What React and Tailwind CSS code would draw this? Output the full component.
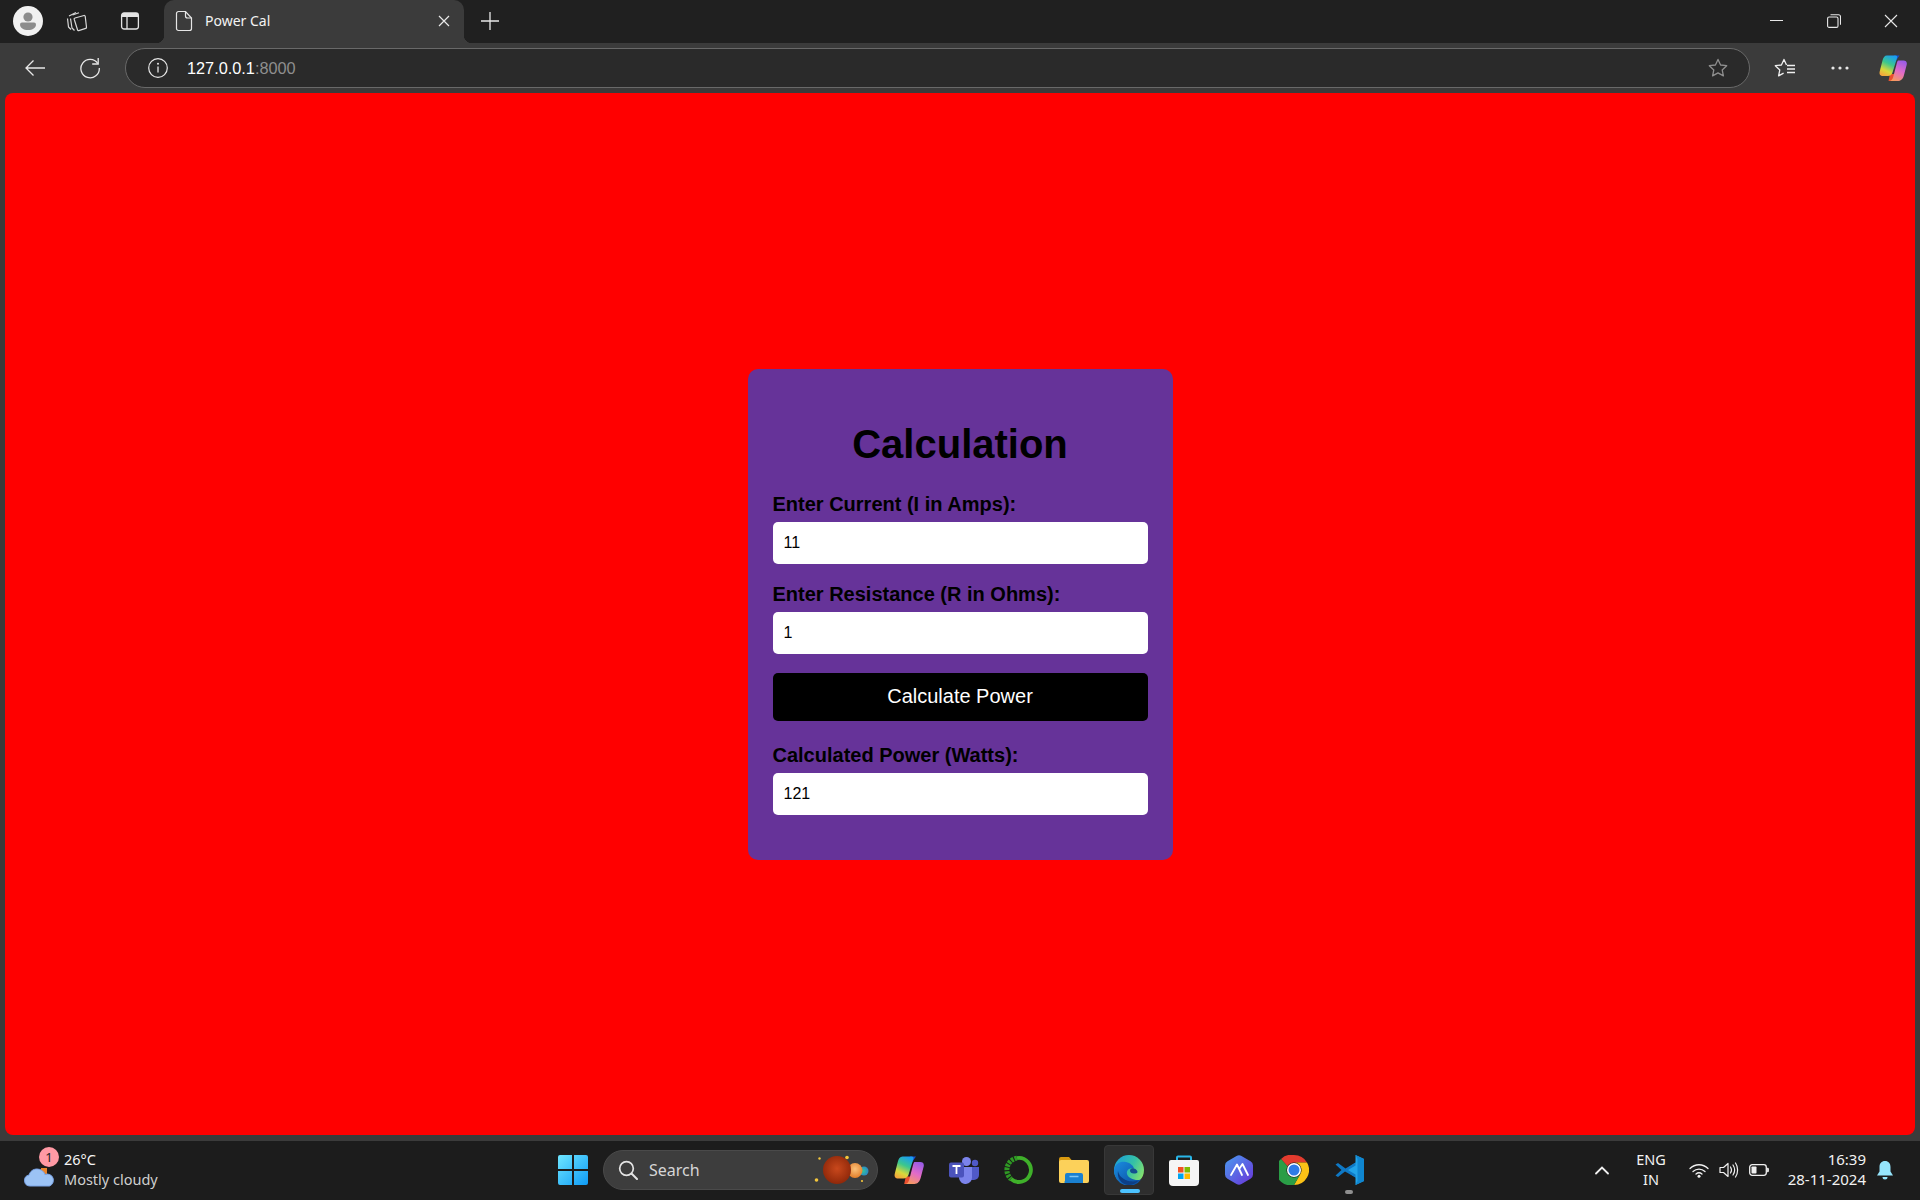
import React from "react";

const chrome = { fontFamily: '"Noto Sans", "Open Sans", sans-serif' };
const page = { fontFamily: '"Liberation Sans", Arial, sans-serif' };

const S = ({ w = 24, h = 24, vb, children, className = "" }) => (
  <svg width={w} height={h} viewBox={vb || `0 0 ${w} ${h}`} fill="none" className={`shrink-0 ${className}`}>
    {children}
  </svg>
);

const Avatar = () => (
  <S w={30} h={30}>
    <circle cx="15" cy="15" r="15" fill="#f1f1f1" />
    <circle cx="15" cy="11" r="4.6" fill="#8c8c8c" />
    <path d="M7 18.5a2 2 0 0 1 2-2h12a2 2 0 0 1 2 2c0 3.5-3.5 5.5-8 5.5s-8-2-8-5.5Z" fill="#8c8c8c" />
  </S>
);

const Collections = () => (
  <S w={22} h={22}>
    <g stroke="#d8d8d8" strokeWidth="1.2" strokeLinejoin="round">
      <path d="M3 6 10 2.500M1.500 8.500 2.500 17l2.500 2.500" />
      <path d="M6.500 5 13 2.800M4.500 8.500 6 18l2.500 2.500" />
      <path d="M9 8l9-2.500a1 1 0 0 1 1.200.8l1.300 11a1 1 0 0 1-.8 1.100l-7 2.200a1 1 0 0 1-1.200-.8L8.200 9.200A1 1 0 0 1 9 8Z" />
    </g>
  </S>
);

const VerticalTabs = () => (
  <S w={20} h={20}>
    <rect x="1.6" y="2" width="16.8" height="16" rx="2.5" stroke="#e4e4e4" strokeWidth="1.3" />
    <path d="M2 3.5a1.5 1.5 0 0 1 1.5-1.5h13A1.5 1.5 0 0 1 18 3.5V6H2Z" fill="#e4e4e4" />
    <path d="M7 6v12" stroke="#e4e4e4" strokeWidth="1.3" />
  </S>
);

const Doc = () => (
  <S w={18} h={22}>
    <path d="M3.5 1.5h7l6 6.5v10.5a2 2 0 0 1-2 2h-11a2 2 0 0 1-2-2v-15a2 2 0 0 1 2-2Z" stroke="#e6e6e6" strokeWidth="1.2" />
    <path d="M10.5 1.5V6a2 2 0 0 0 2 2h4" stroke="#e6e6e6" strokeWidth="1.2" />
  </S>
);

const X = ({ size = 12, stroke = "#e8e8e8", width = 1.2 }) => (
  <S w={size} h={size}>
    <path d={`M1 1L${size - 1} ${size - 1}M${size - 1} 1L1 ${size - 1}`} stroke={stroke} strokeWidth={width} />
  </S>
);

const Plus = () => (
  <S w={18} h={18}>
    <path d="M9 0v18M0 9h18" stroke="#e8e8e8" strokeWidth="1.3" />
  </S>
);

const Back = () => (
  <S w={22} h={18}>
    <path d="M21 9H2M9.5 1.5 2 9l7.5 7.5" stroke="#e8e8e8" strokeWidth="1.3" />
  </S>
);

const Refresh = () => (
  <S w={22} h={22}>
    <path d="M18.8 6.5A9.2 9.2 0 1 0 20.3 11" stroke="#e8e8e8" strokeWidth="1.3" />
    <path d="M19.2 1v6h-6" stroke="#e8e8e8" strokeWidth="1.3" />
  </S>
);

const Info = () => (
  <S w={20} h={20}>
    <circle cx="10" cy="10" r="9.3" stroke="#e8e8e8" strokeWidth="1.2" />
    <path d="M10 8.6v6" stroke="#e8e8e8" strokeWidth="1.3" />
    <circle cx="10" cy="5.8" r="1" fill="#e8e8e8" />
  </S>
);

const StarPath = "M10 1.4 12.6 7l6.1.7-4.5 4.2 1.2 6L10 14.9l-5.4 3 1.2-6L1.3 7.7 7.4 7Z";

const Star = () => (
  <S w={20} h={20}>
    <path d={StarPath} stroke="#8f8f8f" strokeWidth="1.3" strokeLinejoin="round" />
  </S>
);

const Favorites = () => (
  <S w={22} h={20}>
    <path d="M12.5 7 10 1.4 7.4 7 1.3 7.7l4.5 4.2-1.2 6 5-2.8" stroke="#efefef" strokeWidth="1.3" strokeLinejoin="round" />
    <path d="M13 7.5h8M13 11h8M13 14.5h8" stroke="#efefef" strokeWidth="1.3" />
  </S>
);

const Dots = () => (
  <S w={18} h={4}>
    <circle cx="2" cy="2" r="1.6" fill="#e8e8e8" />
    <circle cx="9" cy="2" r="1.6" fill="#e8e8e8" />
    <circle cx="16" cy="2" r="1.6" fill="#e8e8e8" />
  </S>
);

const Win = ({ children }) => <div className="w-[57px] flex items-center justify-center">{children}</div>;

const Copilot = ({ id, size = 28 }) => (
  <svg width={size} height={size} viewBox="0 0 28 28" className="shrink-0">
    <defs>
      <linearGradient id={`${id}a`} x1="0.700" y1="0" x2="0.300" y2="1">
        <stop offset="0" stopColor="#1a9df0" />
        <stop offset="0.400" stopColor="#3bc78e" />
        <stop offset="0.750" stopColor="#d8d83a" />
        <stop offset="1" stopColor="#f4a63c" />
      </linearGradient>
      <linearGradient id={`${id}b`} x1="0.700" y1="0" x2="0.300" y2="1">
        <stop offset="0" stopColor="#9a5ce6" />
        <stop offset="0.500" stopColor="#e26bc8" />
        <stop offset="1" stopColor="#f79a5e" />
      </linearGradient>
    </defs>
    <path d="M15 1.500h5.500L16 8 13 20h-3L14 6Z" fill="#1550d0" />
    <path d="M9.500 27h7c2 0 3-1 3.500-2.500L22 20H11Z" fill="#ea4e2e" />
    <path d="M8 1.500h8.500c1.500 0 2 1 1.500 2.500L13.800 17.500c-.7 3-2.300 4.500-5 4.500H4c-2.500 0-4-1.500-3.300-4.500L3.500 6.500C4.300 3.500 5.500 1.500 8 1.500Z" fill={`url(#${id}a)`} />
    <path d="M19 6.500h5.500c2.500 0 3.800 1.500 3.200 4.200L25 21c-.8 3.500-2.800 6-6 6h-9c2 0 3.500-1.500 4.200-4L18 8.500c.3-1 .6-1.500 1-2Z" fill={`url(#${id}b)`} />
  </svg>
);

const Weather = () => (
  <S w={32} h={26}>
    <path d="M17 4h6v6h-6Z" fill="#e8842c" />
    <path d="M6 22a5.500 5.500 0 0 1-1-10.900C6 7.500 9 5 13 5c4.200 0 7 2.500 8 5.500A5.800 5.800 0 0 1 25.500 22Z" fill="#9cc3f5" stroke="#7aa3e6" strokeWidth="1" />
  </S>
);

const WinLogo = () => (
  <S w={30} h={30}>
    <defs>
      <linearGradient id="wl" x1="0" y1="0" x2="1" y2="1">
        <stop offset="0" stopColor="#6ee6ff" />
        <stop offset="1" stopColor="#0f9bf5" />
      </linearGradient>
    </defs>
    <path d="M0 2a2 2 0 0 1 2-2h12v14H0Z M16 0h12a2 2 0 0 1 2 2v12H16Z M0 16h14v14H2a2 2 0 0 1-2-2Z M16 16h14v12a2 2 0 0 1-2 2H16Z" fill="url(#wl)" />
  </S>
);

const SearchGlass = () => (
  <S w={20} h={20}>
    <circle cx="8.500" cy="8.500" r="6.800" stroke="#e4e4e4" strokeWidth="1.700" />
    <path d="M13.500 13.500 19 19" stroke="#e4e4e4" strokeWidth="2" strokeLinecap="round" />
  </S>
);

const Planets = () => (
  <S w={56} h={32}>
    <defs>
      <radialGradient id="p1" cx="0.500" cy="0.450" r="0.600">
        <stop offset="0" stopColor="#c9481c" />
        <stop offset="1" stopColor="#8a2508" />
      </radialGradient>
      <radialGradient id="p2" cx="0.500" cy="0.400" r="0.600">
        <stop offset="0" stopColor="#fbc27a" />
        <stop offset="1" stopColor="#e27e2a" />
      </radialGradient>
      <radialGradient id="p3" cx="0.400" cy="0.500" r="0.600">
        <stop offset="0" stopColor="#33c49a" />
        <stop offset="1" stopColor="#2a85c9" />
      </radialGradient>
    </defs>
    <circle cx="51" cy="17" r="4.500" fill="url(#p3)" />
    <circle cx="42" cy="16.500" r="7.500" fill="url(#p2)" />
    <circle cx="24" cy="16" r="14" fill="url(#p1)" />
    <circle cx="3.500" cy="26" r="1.800" fill="#f4c63c" />
    <circle cx="6.500" cy="4.500" r="1.200" fill="#f4c63c" />
    <circle cx="34" cy="3.500" r="1.800" fill="#f4c63c" />
    <circle cx="49" cy="27" r="1.100" fill="#f4c63c" />
  </S>
);

const Teams = () => (
  <S w={30} h={28}>
    <circle cx="17.500" cy="5.500" r="4.500" fill="#7b83eb" />
    <circle cx="26" cy="7" r="3.200" fill="#5059c9" />
    <path d="M20 11h10v8a5 5 0 0 1-5 5h-3Z" fill="#5059c9" />
    <path d="M9 11h14v10a6.500 6.500 0 0 1-13 1Z" fill="#7b83eb" />
    <rect x="0" y="6.500" width="15" height="15" rx="2" fill="#4b53bc" />
    <path d="M3.500 10h8M7.500 10v8" stroke="#fff" strokeWidth="1.800" />
  </S>
);

const Ring = () => (
  <S w={30} h={30}>
    <path d="M13 3.100A12 12 0 1 1 7 24" stroke="#3fb02a" strokeWidth="3.800" />
    <path d="M13 3.100A12 12 0 0 0 7 24" stroke="#2f9a24" strokeWidth="5" strokeDasharray="2.600 1" />
  </S>
);

const Folder = () => (
  <S w={30} h={26}>
    <path d="M0 2a2 2 0 0 1 2-2h8l3 3.500H2L0 6Z" fill="#d99a10" />
    <path d="M0 5a2 2 0 0 1 2-2h26a2 2 0 0 1 2 2v19a2 2 0 0 1-2 2H2a2 2 0 0 1-2-2Z" fill="#fcd15a" />
    <path d="M6 24v-6a2 2 0 0 1 2-2h14a2 2 0 0 1 2 2v8H7a1 1 0 0 1-1-2Z" fill="#1a80d0" />
    <path d="M10.500 19.500h9" stroke="#7fc6f5" strokeWidth="1.500" />
  </S>
);

const Edge = () => (
  <S w={30} h={30}>
    <defs>
      <linearGradient id="e1" x1="0" y1="0.200" x2="1" y2="0.700">
        <stop offset="0" stopColor="#1ba0d8" />
        <stop offset="0.550" stopColor="#35c1a5" />
        <stop offset="1" stopColor="#8be46a" />
      </linearGradient>
      <linearGradient id="e2" x1="0" y1="0" x2="1" y2="1">
        <stop offset="0" stopColor="#1a8ce0" />
        <stop offset="1" stopColor="#0a4a9c" />
      </linearGradient>
    </defs>
    <circle cx="15" cy="15" r="15" fill="url(#e1)" />
    <path d="M0 15C1 8 7 6 12 7c4.500 1 7.500 4 8 6.500-3-.8-6 .3-7 3-.8 3 1.500 6.500 7 8 3.500 1 6 .5 7.500-.5A15 15 0 0 1 0 15Z" fill="url(#e2)" />
    <path d="M20 13.500c2 .6 3.500 2 3.500 3.500 0 1.200-2 1.500-3.500 1.500-2.500 0-4-1.300-4-2.800 0-2 2-3 4-2.200Z" fill="#14508f" />
    <path d="M12.500 29.800C6 28 3 22 4 16c.8 4.500 4 7.500 9 9.500 3 1.200 8 1.200 11.500.2A15 15 0 0 1 12.500 29.800Z" fill="#0d3f86" />
  </S>
);

const Store = () => (
  <S w={30} h={31}>
    <path d="M8 6V2.500a1 1 0 0 1 1-1h12a1 1 0 0 1 1 1V6" stroke="#29b6e8" strokeWidth="2" />
    <path d="M0 7a2 2 0 0 1 2-2h26a2 2 0 0 1 2 2v20a4 4 0 0 1-4 4H4a4 4 0 0 1-4-4Z" fill="#f5f5f5" />
    <rect x="9" y="12" width="5.500" height="5.500" fill="#f25022" />
    <rect x="15.500" y="12" width="5.500" height="5.500" fill="#7fba00" />
    <rect x="9" y="18.500" width="5.500" height="5.500" fill="#00a4ef" />
    <rect x="15.500" y="18.500" width="5.500" height="5.500" fill="#ffb900" />
  </S>
);

const Hex = () => (
  <S w={28} h={30}>
    <defs>
      <linearGradient id="hx" x1="0" y1="0" x2="1" y2="1">
        <stop offset="0" stopColor="#4a9cf0" />
        <stop offset="1" stopColor="#6a32d8" />
      </linearGradient>
    </defs>
    <path d="M11.500 1a5 5 0 0 1 5 0l9 5.200a5 5 0 0 1 2.500 4.300v9a5 5 0 0 1-2.500 4.300l-9 5.200a5 5 0 0 1-5 0l-9-5.200A5 5 0 0 1 0 19.500v-9a5 5 0 0 1 2.500-4.300Z" fill="url(#hx)" />
    <path d="M6 20 12 9.500 17 20M14.500 13.500 17.500 9 23 20" stroke="#fff" strokeWidth="1.800" strokeLinejoin="round" strokeLinecap="round" />
  </S>
);

const Chrome = () => (
  <S w={30} h={30}>
    <path d="M15 0a15 15 0 0 1 13 7.500H15a7.500 7.500 0 0 0-6.500 3.750L2 3.900A15 15 0 0 1 15 0Z" fill="#e33b2e" />
    <path d="M28 7.500A15 15 0 0 1 15 30l6.500-11.250A7.500 7.500 0 0 0 21.500 11.250 7.500 7.500 0 0 0 15 7.500Z" fill="#fbc116" />
    <path d="M2 3.900 8.500 11.250a7.500 7.500 0 0 0 0 7.500 7.500 7.500 0 0 0 6.500 3.750 7.500 7.500 0 0 0 6.500-3.750L15 30A15 15 0 0 1 2 3.900Z" fill="#2a9d46" />
    <circle cx="15" cy="15" r="7" fill="#fff" />
    <circle cx="15" cy="15" r="5.500" fill="#2f7be6" />
  </S>
);

const VSCode = () => (
  <S w={30} h={30}>
    <path d="M21.500 0 30 4v22l-8.500 4V22.500L11 15 21.500 7.500Z" fill="#22a3e8" />
    <path d="M21.500 0 30 4v22l-8.500 4 2-4V4Z" fill="#0f86d0" />
    <path d="M1.500 9.500 4 8l7.500 5.500L21.500 7.500v3L14 15l7.500 4.500v3L11 16.500 4 22l-2.500-1.500L7.500 15Z" fill="#0f78c4" />
  </S>
);

const Chevron = () => (
  <S w={14} h={9}>
    <path d="M1 7.500 7 1.500l6 6" stroke="#f0f0f0" strokeWidth="1.800" strokeLinecap="round" />
  </S>
);

const Wifi = () => (
  <S w={20} h={15}>
    <g stroke="#f0f0f0" strokeWidth="1.300" strokeLinecap="round">
      <path d="M1 5.500c5-5 13-5 18 0" />
      <path d="M4 8.500c3.500-3.300 8.500-3.300 12 0" />
      <path d="M7 11c2-1.700 4-1.700 6 0" />
    </g>
    <circle cx="10" cy="13.300" r="1.500" fill="#f0f0f0" />
  </S>
);

const Volume = () => (
  <S w={20} h={16}>
    <path d="M1 5.500h3.500L9 1.500v13l-4.500-4H1Z" stroke="#f0f0f0" strokeWidth="1.200" strokeLinejoin="round" />
    <path d="M11.500 5c1.200 1.800 1.200 4.200 0 6M14 3c2 3 2 7 0 10M16.500 1c2.800 4 2.800 10 0 14" stroke="#f0f0f0" strokeWidth="1.200" strokeLinecap="round" />
  </S>
);

const Battery = () => (
  <S w={20} h={12}>
    <rect x="0.700" y="0.700" width="16.600" height="10.600" rx="2.500" stroke="#f0f0f0" strokeWidth="1.300" />
    <rect x="2.500" y="2.500" width="5" height="7" rx="0.800" fill="#f0f0f0" />
    <path d="M18.500 4v4a1 1 0 0 0 1-1V5a1 1 0 0 0-1-1Z" fill="#f0f0f0" stroke="#f0f0f0" strokeWidth="0.800" />
  </S>
);

const Bell = () => (
  <S w={16} h={19}>
    <path d="M8 0c3.500 0 5.500 2.500 5.500 6v4.500L16 14.500H0l2.500-4V6C2.500 2.500 4.500 0 8 0Z" fill="#95e4fb" />
    <path d="M5.500 16h5a2.500 2.500 0 0 1-5 0Z" fill="#95e4fb" />
  </S>
);

const TaskIcon = ({ children, active, dot }) => (
  <div className={`relative w-[50px] h-[50px] mx-[2.500px] flex items-center justify-center rounded ${active ? "bg-[#2e2e2e] border border-[#383838]" : ""}`}>
    {children}
    {active && <span className="absolute bottom-[1px] left-[15px] w-5 h-[4px] rounded-full bg-[#4cc2ff]" />}
    {dot && <span className="absolute bottom-[1px] left-[21px] w-2 h-[4px] rounded-full bg-[#8f8f8f]" />}
  </div>
);

const Field = ({ label, value, top }) => (
  <div className={top}>
    <label className="block h-[25px] mb-[5px] text-[20px] leading-[25px] font-bold text-black">{label}</label>
    <input
      readOnly
      value={value}
      className="block w-full h-[42px] px-[11px] rounded-[5px] bg-white text-[16px] text-black outline-none"
      style={page}
    />
  </div>
);

export default function App() {
  return (
    <div className="w-[1920px] h-[1200px] flex flex-col overflow-hidden bg-[#3b3b3b]" style={chrome}>
      {/* Title bar */}
      <div className="h-[43px] shrink-0 flex items-center bg-[#202020] pl-[13px] pb-[2px]">
        <Avatar />
        <div className="w-[39px] ml-[14px] flex justify-center"><Collections /></div>
        <div className="w-[20px] ml-[24px]"><VerticalTabs /></div>
        <div className="relative ml-[24px] -mb-[2px] w-[300px] h-[43px] rounded-t-[10px] bg-[#3b3b3b] flex items-center pl-[11px] pr-[14px] pb-[2px]">
          <Doc />
          <span className="ml-[12px] text-[14px] text-[#f3f3f3]">Power Cal</span>
          <div className="ml-auto"><X /></div>
          <span className="absolute bottom-0 -left-[8px] w-2 h-2 bg-[radial-gradient(circle_at_0_0,#202020_8px,#3b3b3b_8.500px)]" />
          <span className="absolute bottom-0 -right-[8px] w-2 h-2 bg-[radial-gradient(circle_at_100%_0,#202020_8px,#3b3b3b_8.500px)]" />
        </div>
        <div className="ml-[17px]"><Plus /></div>
        <div className="ml-auto flex items-center pr-[1px]">
          <Win><div className="w-[13px] h-[1px] bg-[#e8e8e8]" /></Win>
          <Win>
            <S w={14} h={14}>
              <rect x="0.600" y="3" width="10.400" height="10.400" rx="1.500" stroke="#e8e8e8" strokeWidth="1.100" />
              <path d="M3.500 0.800h8a2 2 0 0 1 2 2v8" stroke="#e8e8e8" strokeWidth="1.100" />
            </S>
          </Win>
          <Win><X size={14} width={1.100} /></Win>
        </div>
      </div>

      {/* Toolbar */}
      <div className="h-[50px] shrink-0 flex items-center bg-[#3b3b3b] pl-[24px]">
        <Back />
        <div className="ml-[33px]"><Refresh /></div>
        <div className="ml-[24px] w-[1625px] h-[40px] rounded-full border border-[#696969] bg-[#2a2a2a] flex items-center pl-[22px] pr-[21px]">
          <Info />
          <span className="ml-[19px] text-[16.300px] text-white" style={page}>
            127.0.0.1<span className="text-[#8f8f8f]">:8000</span>
          </span>
          <div className="ml-auto"><Star /></div>
        </div>
        <div className="ml-[24px]"><Favorites /></div>
        <div className="ml-[35px]"><Dots /></div>
        <div className="ml-[30px]"><Copilot id="c1" /></div>
      </div>

      {/* Page */}
      <div className="h-[1042px] shrink-0 mx-[5px] rounded-lg bg-[#ff0000] flex items-center justify-center" style={page}>
        <div className="w-[425px] h-[491px] rounded-[10px] bg-[#663399] px-[25px] pt-[52px] pb-[45px]">
          <h1 className="h-[46px] text-[40px] leading-[46px] font-bold text-black text-center">Calculation</h1>
          <Field label="Enter Current (I in Amps):" value="11" top="mt-[25px]" />
          <Field label="Enter Resistance (R in Ohms):" value="1" top="mt-[18px]" />
          <button className="block w-full h-[48px] mt-[19px] pb-[2px] rounded-[5px] bg-black text-white text-[20px]">Calculate Power</button>
          <Field label="Calculated Power (Watts):" value="121" top="mt-[22px]" />
        </div>
      </div>

      {/* Taskbar */}
      <div className="mt-[6px] h-[59px] shrink-0 flex items-center bg-[#1c1c1c] text-white pb-[1px]">
        <div className="w-[545px] flex items-center pl-[24px]">
          <div className="relative w-[34px] h-[40px] flex items-end">
            <Weather />
            <span className="absolute -top-[3px] left-[15px] w-5 h-5 rounded-full bg-[#ff99a4] text-[#222] text-[13px] leading-5 text-center">1</span>
          </div>
          <div className="ml-[6px] pb-[3px] flex flex-col text-[14.500px] leading-[20px]">
            <span className="text-[#f5f5f5]">26°C</span>
            <span className="text-[#cfcfcf]">Mostly cloudy</span>
          </div>
        </div>
        <div className="w-[55px] flex justify-center"><WinLogo /></div>
        <div className="ml-[3px] w-[275px] h-[40px] rounded-full bg-[#3d3d3d] border border-[#4a4a4a] flex items-center pl-[14px] pr-[8px]">
          <SearchGlass />
          <span className="ml-[11px] text-[16px] text-[#d6d6d6]">Search</span>
          <div className="ml-auto"><Planets /></div>
        </div>
        <div className="ml-[3px] flex items-center">
          <TaskIcon><Copilot id="c2" size={30} /></TaskIcon>
          <TaskIcon><Teams /></TaskIcon>
          <TaskIcon><Ring /></TaskIcon>
          <TaskIcon><Folder /></TaskIcon>
          <TaskIcon active><Edge /></TaskIcon>
          <TaskIcon><Store /></TaskIcon>
          <TaskIcon><Hex /></TaskIcon>
          <TaskIcon><Chrome /></TaskIcon>
          <TaskIcon dot><VSCode /></TaskIcon>
        </div>
        <div className="ml-auto flex items-center pr-[27px]">
          <Chevron />
          <div className="ml-[19px] pb-[3px] w-[46px] text-center text-[14.500px] leading-[20px] text-[#f2f2f2]">
            <div>ENG</div>
            <div>IN</div>
          </div>
          <div className="ml-[15px]"><Wifi /></div>
          <div className="ml-[10px]"><Volume /></div>
          <div className="ml-[10px]"><Battery /></div>
          <div className="ml-[11px] pb-[3px] w-[86px] text-right text-[15px] leading-[20px] text-[#f2f2f2]">
            <div>16:39</div>
            <div>28-11-2024</div>
          </div>
          <div className="ml-[11px]"><Bell /></div>
        </div>
      </div>
    </div>
  );
}
